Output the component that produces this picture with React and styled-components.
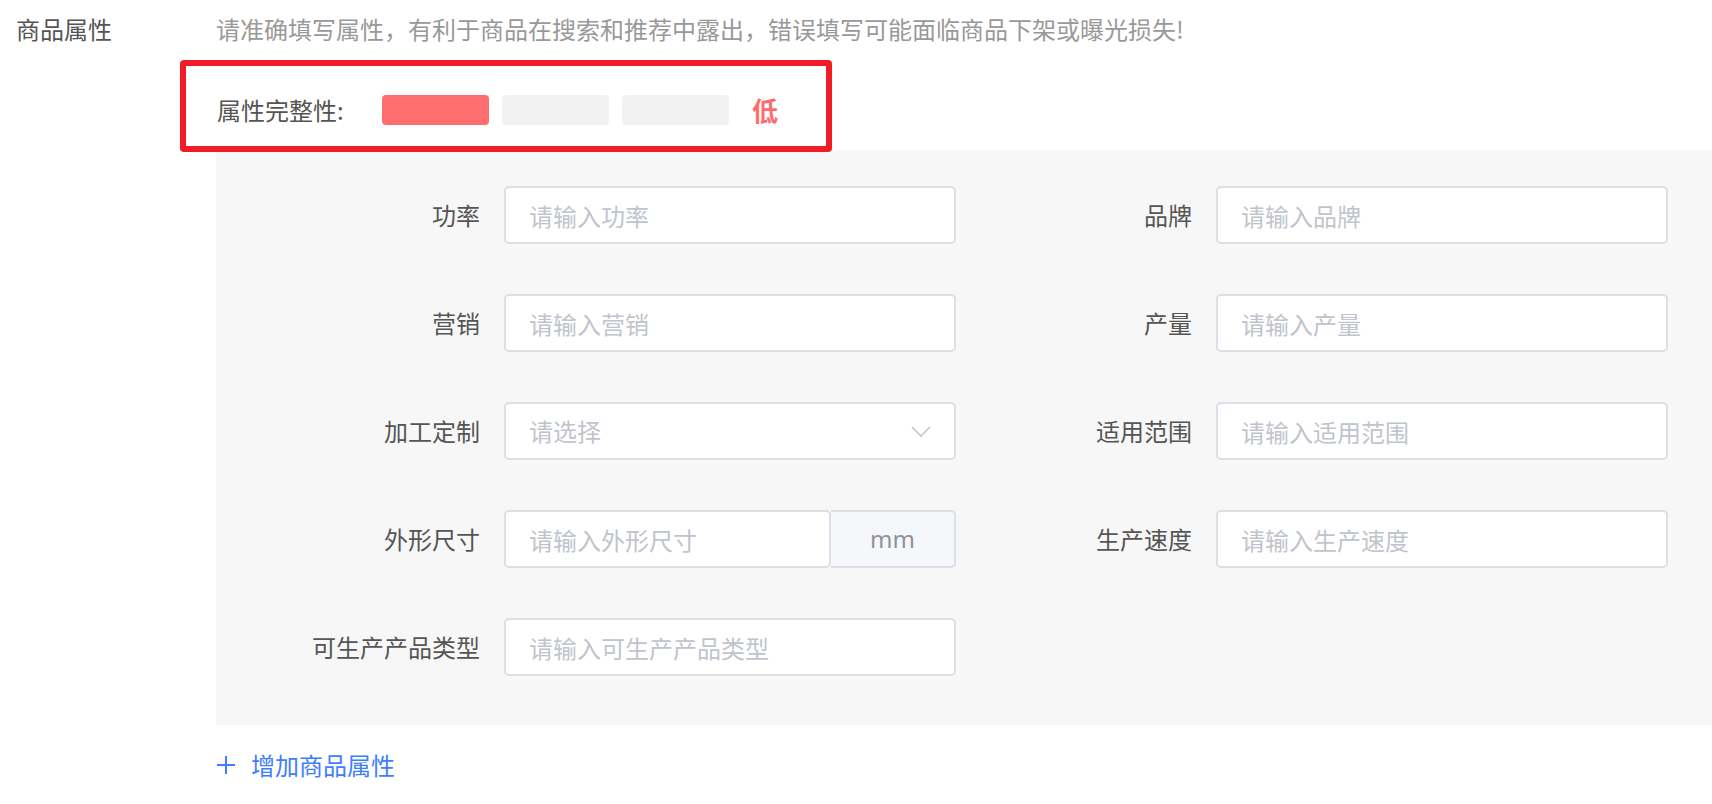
import React from "react";
import styled, { createGlobalStyle } from "styled-components";

const GlobalStyle = createGlobalStyle`
  html, body {
    margin: 0;
    padding: 0;
    background: #ffffff;
  }
  body {
    font-family: "Noto Sans CJK SC", "Noto Sans", sans-serif;
    overflow: hidden;
  }
`;

const fields = [
  { label: "功率", placeholder: "请输入功率" },
  { label: "品牌", placeholder: "请输入品牌" },
  { label: "营销", placeholder: "请输入营销" },
  { label: "产量", placeholder: "请输入产量" },
  { label: "加工定制", placeholder: "请选择", type: "select" },
  { label: "适用范围", placeholder: "请输入适用范围" },
  { label: "外形尺寸", placeholder: "请输入外形尺寸", unit: "mm" },
  { label: "生产速度", placeholder: "请输入生产速度" },
  { label: "可生产产品类型", placeholder: "请输入可生产产品类型" },
];

const App = () => {
  return (
    <>
      <GlobalStyle />
      <Section>
        <SectionTitle>商品属性</SectionTitle>
        <Content>
          <Hint>请准确填写属性，有利于商品在搜索和推荐中露出，错误填写可能面临商品下架或曝光损失!</Hint>
          <Completeness>
            <CompleteLabel>属性完整性:</CompleteLabel>
            <Bars>
              <Bar $active />
              <Bar />
              <Bar />
            </Bars>
            <Level>低</Level>
          </Completeness>
          <Panel>
            {fields.map((f) => (
              <Field key={f.label}>
                <FieldLabel>{f.label}</FieldLabel>
                {f.type === "select" ? (
                  <SelectBox>
                    <SelectText>{f.placeholder}</SelectText>
                    <svg width="20" height="11" viewBox="0 0 20 11">
                      <polyline
                        points="1,1 10,10 19,1"
                        fill="none"
                        stroke="#c0c4cc"
                        strokeWidth="1.5"
                      />
                    </svg>
                  </SelectBox>
                ) : f.unit ? (
                  <Group>
                    <Input placeholder={f.placeholder} $grouped />
                    <Addon>{f.unit}</Addon>
                  </Group>
                ) : (
                  <Input placeholder={f.placeholder} />
                )}
              </Field>
            ))}
          </Panel>
          <AddButton>
            <svg width="20" height="20" viewBox="0 0 20 20">
              <path d="M10 1v18M1 10h18" stroke="#3d7eff" strokeWidth="2" />
            </svg>
            增加商品属性
          </AddButton>
        </Content>
      </Section>
    </>
  );
};

export default App;

const Section = styled.div`
  display: grid;
  grid-template-columns: 200px 1fr;
  padding: 12px 0 0 16px;
  font-size: 24px;
  line-height: 34px;
`;

const SectionTitle = styled.div`
  color: #555555;
`;

const Content = styled.div`
  display: flex;
  flex-direction: column;
  align-items: flex-start;
`;

const Hint = styled.div`
  color: #999999;
  white-space: nowrap;
`;

const Completeness = styled.div`
  position: relative;
  z-index: 1;
  display: flex;
  align-items: center;
  box-sizing: border-box;
  width: 652px;
  height: 92px;
  margin: 14px 0 -2px -36px;
  padding: 8px 0 0 31px;
  border: 6px solid #f21d24;
  border-radius: 4px;
`;

const CompleteLabel = styled.div`
  width: 165px;
  color: #555555;
`;

const Bars = styled.div`
  display: flex;
  gap: 13px;
`;

const Bar = styled.div`
  width: 107px;
  height: 30px;
  border-radius: 4px;
  background: ${(p) => (p.$active ? "#ff6e6e" : "#f2f2f2")};
`;

const Level = styled.div`
  margin-left: 23px;
  font-size: 26px;
  font-weight: 700;
  color: #ff6b6b;
`;

const Panel = styled.div`
  align-self: stretch;
  display: grid;
  grid-template-columns: 712px 712px;
  row-gap: 50px;
  padding: 36px 0 49px 28px;
  background: #f7f7f7;
`;

const Field = styled.div`
  display: grid;
  grid-template-columns: 236px 452px;
  column-gap: 24px;
  align-items: center;
`;

const FieldLabel = styled.div`
  text-align: right;
  color: #555555;
  white-space: nowrap;
`;

const Input = styled.input`
  box-sizing: border-box;
  width: ${(p) => (p.$grouped ? "327px" : "452px")};
  height: 58px;
  padding: 0 23px;
  border: 2px solid #dcdfe6;
  border-radius: 5px;
  background: #ffffff;
  font-family: inherit;
  font-size: 24px;
  color: #555555;
  outline: none;

  &::placeholder {
    color: #c0c4cc;
  }
`;

const SelectBox = styled.div`
  box-sizing: border-box;
  display: flex;
  align-items: center;
  justify-content: space-between;
  width: 452px;
  height: 58px;
  padding: 0 23px;
  border: 2px solid #dcdfe6;
  border-radius: 5px;
  background: #ffffff;
`;

const SelectText = styled.span`
  color: #c0c4cc;
`;

const Group = styled.div`
  display: flex;
`;

const Addon = styled.div`
  box-sizing: border-box;
  display: flex;
  align-items: center;
  justify-content: center;
  width: 125px;
  height: 58px;
  border: 2px solid #dcdfe6;
  border-left: 0;
  border-radius: 0 5px 5px 0;
  background: #f5f7fa;
  color: #909399;
  font-family: "Noto Sans", sans-serif;
`;

const AddButton = styled.div`
  display: flex;
  align-items: center;
  gap: 15px;
  margin-top: 23px;
  color: #3d7eff;
  cursor: pointer;
`;
